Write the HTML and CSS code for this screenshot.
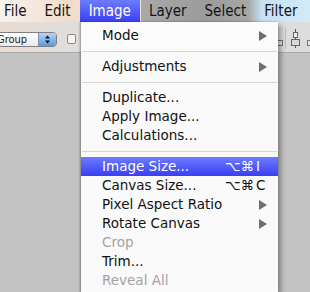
FILE: index.html
```html
<!DOCTYPE html>
<html>
<head>
  <title>Image Menu</title>
  <link rel="stylesheet" href="styles.css">
</head>
<body>
  <div class="menubar">
    <span class="title first">File</span>
    <span class="title">Edit</span>
    <span class="title active">Image</span>
    <span class="title">Layer</span>
    <span class="title">Select</span>
    <span class="title">Filter</span>
  </div>

  <div class="options">
    <div class="select">
      <span class="select-label">Group</span>
      <span class="stepper">
        <svg width="17" height="13" viewBox="0 0 17 13">
          <path d="M6 5.5 L8.5 2.5 L11 5.5 Z" fill="#111"/>
          <path d="M6 7.5 L8.5 10.5 L11 7.5 Z" fill="#111"/>
        </svg>
      </span>
    </div>
    <span class="checkbox"></span>
    <div class="align-icons">
      <svg width="36" height="31" viewBox="0 0 36 31">
        <rect x="3.5" y="18.5" width="5" height="5" fill="#e4e4e4" stroke="#777"/>
        <line x1="11.5" y1="6" x2="11.5" y2="27" stroke="#bdbdbd"/>
        <line x1="21.5" y1="7" x2="21.5" y2="26" stroke="#555"/>
        <rect x="19.5" y="10.5" width="4" height="5" fill="#eee" stroke="#666"/>
        <rect x="17.5" y="17.5" width="8" height="6" fill="#d8d8d8" stroke="#666"/>
        <rect x="33.5" y="18.5" width="5" height="5" fill="#e4e4e4" stroke="#777"/>
      </svg>
    </div>
  </div>

  <ul class="dropdown">
    <li class="item"><span class="label">Mode</span><span class="arrow"></span></li>
    <li class="sep"></li>
    <li class="item"><span class="label">Adjustments</span><span class="arrow"></span></li>
    <li class="sep"></li>
    <li class="item"><span class="label">Duplicate...</span></li>
    <li class="item"><span class="label">Apply Image...</span></li>
    <li class="item"><span class="label">Calculations...</span></li>
    <li class="sep"></li>
    <li class="item selected"><span class="label">Image Size...</span><span class="shortcut"><span class="mods">⌥⌘</span><span class="key">I</span></span></li>
    <li class="item"><span class="label">Canvas Size...</span><span class="shortcut"><span class="mods">⌥⌘</span><span class="key">C</span></span></li>
    <li class="item"><span class="label">Pixel Aspect Ratio</span><span class="arrow"></span></li>
    <li class="item"><span class="label">Rotate Canvas</span><span class="arrow"></span></li>
    <li class="item disabled"><span class="label">Crop</span></li>
    <li class="item"><span class="label">Trim...</span></li>
    <li class="item disabled"><span class="label">Reveal All</span></li>
  </ul>
</body>
</html>
```

FILE: styles.css
```css
body {
  margin: 0;
  width: 310px;
  height: 292px;
  overflow: hidden;
  position: relative;
  background-color: #c3c3c3;
  font-family: "DejaVu Sans", sans-serif;
}

/* top menu bar */
.menubar {
  display: flex;
  height: 22px;
  font-family: "DejaVu Sans Condensed", "DejaVu Sans", sans-serif;
  font-size: 15px;
  color: #141414;
  background: linear-gradient(to right, #f7f3ef 0, #f1dccc 70px, #eee3da 141px, #a9a9a9 141px, #9b9b9b 205px, #a6a6a6 248px, #c6e1f2 262px, #d2ebf9 310px);
}

.title {
  padding: 0 9px;
  line-height: 22px;
  white-space: nowrap;
}

.title.first {
  padding-left: 4px;
}

.title.active {
  color: #fff;
  background: linear-gradient(#6c7cfd, #3a3ff3);
}

/* options bar */
.options {
  display: flex;
  align-items: flex-start;
  height: 31px;
  box-sizing: border-box;
  background: linear-gradient(to right, #e9dcd2, #dedede 90px, #dcdcdc);
  border-bottom: 1px solid #a9a9a9;
}

.select {
  display: flex;
  margin: 10px 0 0 -3px;
  width: 60px;
  height: 15px;
  box-sizing: border-box;
  border: 1px solid #7f7f7f;
  border-radius: 4px;
  background: linear-gradient(#ffffff, #e9e9e9);
  font-family: "DejaVu Sans Condensed", "DejaVu Sans", sans-serif;
  font-size: 11px;
  color: #222;
  overflow: hidden;
}

.select-label {
  flex: 1;
  line-height: 13px;
  margin-left: -1px;
}

.stepper {
  width: 17px;
  height: 13px;
  background: linear-gradient(#b4d4f7, #5d98e4);
  border-left: 1px solid #7d93b5;
}

.stepper svg {
  display: block;
}

.checkbox {
  margin: 12px 0 0 10px;
  width: 9px;
  height: 10px;
  box-sizing: border-box;
  border: 1px solid #8a8a8a;
  border-radius: 2px;
  background: #f4f4f4;
}

.align-icons {
  margin-left: auto;
  width: 36px;
  height: 30px;
}

.align-icons svg {
  display: block;
}

/* dropdown menu */
.dropdown {
  position: absolute;
  left: 81px;
  top: 22px;
  width: 197px;
  height: 270px;
  box-sizing: border-box;
  margin: 0;
  padding: 4px 0 0;
  list-style: none;
  background: rgba(252, 252, 252, 0.97);
  box-shadow: -1px 0 2px rgba(0, 0, 0, 0.35), 3px 3px 5px rgba(0, 0, 0, 0.35);
  font-size: 13.5px;
  color: #111;
}

.item {
  display: flex;
  align-items: center;
  height: 19px;
  line-height: 19px;
  padding: 0 11px 0 21px;
  white-space: nowrap;
}

.item .label {
  flex: 1;
}

.item.selected {
  color: #fff;
  background: linear-gradient(#6c7cfd, #3a3ff3);
}

.item.disabled {
  color: #a3a3a3;
}

.arrow {
  width: 0;
  height: 0;
  border-left: 8px solid #6e6e6e;
  border-top: 5px solid transparent;
  border-bottom: 5px solid transparent;
}

.shortcut {
  display: flex;
  width: 42px;
}

.mods {
  flex: 1;
  text-align: right;
}

.key {
  width: 15px;
  padding-left: 2px;
}

.sep {
  height: 1px;
  margin: 6px 1px 5px;
  background: #d6d6d6;
}
```
